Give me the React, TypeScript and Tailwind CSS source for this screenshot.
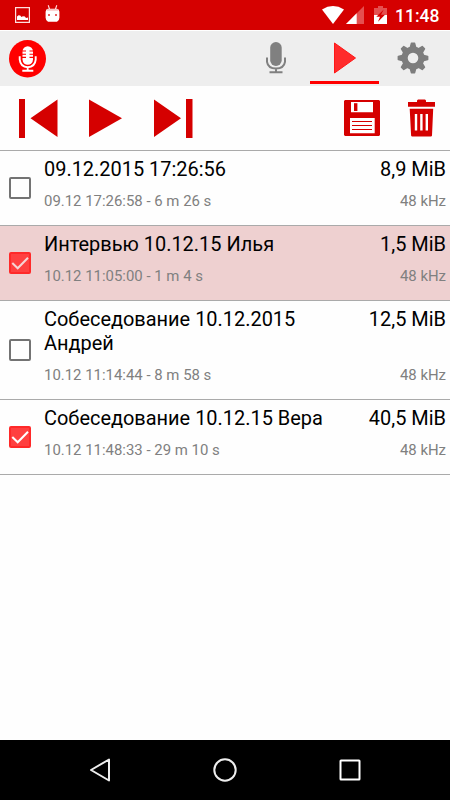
import React from "react";
import { clsx } from "clsx";

interface Recording {
  title: string;
  details: string;
  size: string;
  rate: string;
  checked?: boolean;
  highlighted?: boolean;
}

const recordings: Recording[] = [
  { title: "09.12.2015 17:26:56", details: "09.12 17:26:58 - 6 m 26 s", size: "8,9 MiB", rate: "48 kHz" },
  {
    title: "Интервью 10.12.15 Илья",
    details: "10.12 11:05:00 - 1 m 4 s",
    size: "1,5 MiB",
    rate: "48 kHz",
    checked: true,
    highlighted: true,
  },
  { title: "Собеседование 10.12.2015 Андрей", details: "10.12 11:14:44 - 8 m 58 s", size: "12,5 MiB", rate: "48 kHz" },
  { title: "Собеседование 10.12.15 Вера", details: "10.12 11:48:33 - 29 m 10 s", size: "40,5 MiB", rate: "48 kHz", checked: true },
];

const StatusBar = () => (
  <div className="flex h-[30px] shrink-0 items-start bg-[#d50000] pr-[10px] pl-[15px] text-white">
    <svg className="mt-[7px] h-4 w-[15px]" viewBox="0 0 15 16" fill="none">
      <path d="M.6.6h13.8v14.8H.6z" stroke="#ffe0e0" strokeWidth="1.2" />
      <path d="M2 13v-3.5l1.500-1.300 1.700.3L6.500 10l1.400-.7 2 .2L11 11l2-.6V13z" fill="#fff" />
    </svg>
    <svg className="mt-[5px] ml-[15px] h-[17px] w-[15px]" viewBox="0 0 15 17">
      <path d="M3.200.3l1.400 4M11.800.3l-1.400 4" stroke="#ffdcdc" strokeWidth="1.1" />
      <path d="M3 3.800h9q2 .2 2.400 3v6q-.2 3.300-2.400 4H3q-2.200-.7-2.400-4v-6Q1 4 3 3.800z" fill="#fff" />
      <path d="M2 4.200h11v1.400H2z" fill="#f7b4b4" />
      <path d="M3 9h2v2H3zM10 9h2v2h-2z" fill="#e96060" />
    </svg>
    <div className="ml-auto flex">
      <svg className="mt-[6px] h-[18px] w-[22px]" viewBox="0 0 22 18">
        <path d="M0 3.400Q11-3.400 22 3.400L11 18z" fill="#fff" />
      </svg>
      <svg className="mt-[6px] ml-[2px] h-[18px] w-[18px]" viewBox="0 0 18 18">
        <path d="M18 0v18H0z" fill="#e55050" />
        <path d="M10.700 7.300V18H0z" fill="#fff" />
      </svg>
      <svg className="mt-[6px] ml-[10px] h-[18px] w-[13px]" viewBox="0 0 13 18">
        <path d="M4 0h5v2h4v16H0V2h4z" fill="#e55050" />
        <path d="M0 9h13v9H0z" fill="#fff" />
        <path d="M9.800 3.500L2.300 10.700H6l-2 5 7-7H7z" fill="#d50000" />
      </svg>
      <span className="ml-2 w-[45px] pt-[6px] text-[17.500px] leading-5 font-medium whitespace-nowrap">11:48</span>
    </div>
  </div>
);

const Logo = () => (
  <svg className="ml-[9px] h-[38px] w-[37px]" viewBox="0 0 37 38">
    <ellipse cx="18.500" cy="18.700" rx="18.500" ry="18.700" fill="#f00" />
    <rect x="13.500" y="6.200" width="10.500" height="18.500" rx="5.250" fill="#fff" />
    <path d="M13 11h4M13 14.200h4M13 17.400h4M20.500 11h4M20.500 14.200h4M20.500 17.400h4" stroke="#f00" strokeWidth="1.100" />
    <path d="M10.700 16.200v3.500q.8 7.300 8 7.600 7.300-.3 8-7.600v-3.500M18.700 27.300v3.500M13.300 30.700h11" stroke="#fff" strokeWidth="1.900" fill="none" />
  </svg>
);

const MicIcon = () => (
  <svg className="h-8 w-5" viewBox="0 0 20 32">
    <rect x="4.200" y="0" width="11.500" height="24" rx="5.700" fill="#808080" />
    <path d="M1 15.500v4.300Q2 26.300 10 26.600q8-.3 9-6.800v-4.300M10 27v3M3.500 30.300h13" stroke="#808080" strokeWidth="2" fill="none" />
  </svg>
);

const GearIcon = () => (
  <svg className="h-8 w-8" viewBox="0 0 32 32">
    <g fill="#7d7d7d">
      {[0, 45, 90, 135, 180, 225, 270, 315].map((angle) => (
        <path key={angle} d="M12.400 6l1.300-4.800q.1-.6.700-.6h3.200q.6 0 .7.600L19.600 6z" transform={`rotate(${angle} 16 16)`} />
      ))}
    </g>
    <circle cx="16" cy="16" r="8.400" stroke="#7d7d7d" strokeWidth="6.200" fill="none" />
  </svg>
);

const Header = () => (
  <div className="flex h-14 shrink-0 items-center border-t border-white bg-[#eee] pr-[2px]">
    <Logo />
    <div className="ml-auto flex h-full">
      <button className="flex w-[69px] justify-center pt-[11px]" aria-label="Record">
        <MicIcon />
      </button>
      <button className="flex h-[53px] w-[69px] justify-center border-b-3 border-[#ff0000] pt-[11px]" aria-label="Play">
        <svg className="h-8 w-6" viewBox="0 0 24 32">
          <path d="M1.500 1L22.500 16 1.500 31z" fill="#ff2b2b" stroke="#ff1616" strokeLinejoin="round" />
        </svg>
      </button>
      <button className="flex w-[69px] justify-center pt-[11px] pr-[2px]" aria-label="Settings">
        <GearIcon />
      </button>
    </div>
  </div>
);

const Toolbar = () => (
  <div className="flex h-[65px] shrink-0 items-start border-b border-[#aaa] pr-[15px] pl-[19px] pt-[13px]">
    <svg className="h-[39px] w-[39px]" viewBox="0 0 39 39" fill="#d50000">
      <path d="M0 0h6v39H0zM38.500.5v37.500L11.500 19.300z" />
    </svg>
    <svg className="ml-[31px] h-[39px] w-[33px]" viewBox="0 0 33 39" fill="#d50000">
      <path d="M0 .5v37.500l33-18.700z" />
    </svg>
    <svg className="ml-[32px] h-[39px] w-[39px]" viewBox="0 0 39 39" fill="#d50000">
      <path d="M0 .5v37.500l27-18.700zM32 0h6.500v39H32z" />
    </svg>
    <svg className="mt-[1px] ml-auto h-9 w-9" viewBox="0 0 36 36">
      <path d="M1 0h34l1 1v34l-1 1H1l-1-1V1z" fill="#d50000" />
      <path d="M7 2h22v10.200H7zM6 18h24.700v15.300H6z" fill="#fff" />
      <path d="M10 3.200h3.400v7.800H10z" fill="#d50000" />
      <path d="M8 21.500h20M8 25.500h20M8 29.500h20" stroke="#d50000" strokeWidth="1.200" />
    </svg>
    <svg className="ml-7 h-[38px] w-[27px]" viewBox="0 0 27 38">
      <path d="M0 3h9V1.500L10 .500h7l1 1V3h9v4.700H0zM1.700 9.700h23.500l-1.200 26.800q-.1 1-1.200 1H4.300q-1.100 0-1.200-1z" fill="#d50000" />
      <path d="M8 15v16.500M13.400 15v16.500M18.800 15v16.500" stroke="#fff" strokeWidth="2.400" />
    </svg>
  </div>
);

const Checkbox = ({ checked, highlighted }: { checked?: boolean; highlighted?: boolean }) => (
  <div
    className={clsx(
      "ml-[9px] h-[22px] w-[22px] shrink-0 rounded-[2px] border-2",
      checked ? "border-[#ff2929] bg-[#ff4040]" : "border-[#737373]"
    )}
  >
    {checked && (
      <svg className="h-[18px] w-[18px]" viewBox="0 0 18 18" fill="none">
        <path d="M1.300 9l5.400 5.300L17 3.700" stroke={highlighted ? "#f5d5d5" : "#fff"} strokeWidth="2" />
      </svg>
    )}
  </div>
);

const RecordingRow = ({ title, details, size, rate, checked, highlighted }: Recording) => (
  <div className={clsx("flex items-center border-b border-[#aaa] pr-[4px]", highlighted && "bg-[#eed0d0]")}>
    <Checkbox checked={checked} highlighted={highlighted} />
    <div className="ml-[13px] flex-1 pt-[6px] pb-[15px]">
      <div className="flex justify-between text-[19.950px] leading-6 text-black">
        <span className="max-w-[300px]">{title}</span>
        <span className="whitespace-nowrap">{size}</span>
      </div>
      <div className="mt-[11px] flex justify-between text-[14.930px] leading-[18px] text-[#808080]">
        <span>{details}</span>
        <span>{rate}</span>
      </div>
    </div>
  </div>
);

const NavigationBar = () => (
  <div className="mt-auto flex h-[60px] shrink-0 items-center justify-between bg-black pr-[89px] pl-[89px]">
    <svg className="h-6 w-[22px]" viewBox="0 0 22 24" fill="none">
      <path d="M20 1.500v21L2 12z" stroke="#eee" strokeWidth="2" strokeLinejoin="round" />
    </svg>
    <svg className="h-6 w-6" viewBox="0 0 24 24" fill="none">
      <circle cx="12" cy="12" r="10.700" stroke="#eee" strokeWidth="2" />
    </svg>
    <svg className="h-[22px] w-[22px]" viewBox="0 0 22 22" fill="none">
      <rect x="1.500" y="1.500" width="19" height="19" rx=".5" stroke="#fff" strokeWidth="2" />
    </svg>
  </div>
);

const App = () => {
  return (
    <div className="flex h-[800px] w-[450px] flex-col overflow-hidden bg-[#fefefe] font-[Roboto,sans-serif]">
      <StatusBar />
      <Header />
      <Toolbar />
      <div>
        {recordings.map((recording) => (
          <RecordingRow key={recording.title} {...recording} />
        ))}
      </div>
      <NavigationBar />
    </div>
  );
};

export default App;
